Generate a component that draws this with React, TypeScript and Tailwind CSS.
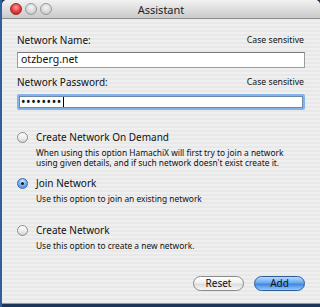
const radios = [
  {
    label: "Create Network On Demand",
    desc: [
      "When using this option HamachiX will first try to join a network",
      "using given details, and if such network doesn't exist create it.",
    ],
    checked: false,
    gap: "mt-0",
  },
  { label: "Join Network", desc: ["Use this option to join an existing network"], checked: true, gap: "mt-[8px]" },
  { label: "Create Network", desc: ["Use this option to create a new network."], checked: false, gap: "mt-[19px]" },
];

function Light({ color }: { color: "red" | "gray" }) {
  return (
    <span
      className={`block h-[12px] w-[12px] rounded-full border ${
        color === "red"
          ? "border-[#9c2a2a] bg-[radial-gradient(circle_at_50%_35%,#ff9a9a_0%,#e23a3a_55%,#b01818_100%)]"
          : "border-[#9a9a9a] bg-[radial-gradient(circle_at_50%_35%,#f4f4f4_0%,#d6d6d6_60%,#b5b5b5_100%)]"
      }`}
    />
  );
}

function Radio({ checked }: { checked: boolean }) {
  if (checked) {
    return (
      <span className="flex h-[11px] w-[11px] items-center justify-center rounded-full border border-[#3b6db0] bg-[radial-gradient(circle_at_50%_30%,#e0f0ff_0%,#7fb4ee_45%,#3f82d8_100%)]">
        <span className="block h-[3px] w-[3px] rounded-full bg-[#101c2c]" />
      </span>
    );
  }
  return (
    <span className="block h-[11px] w-[11px] rounded-full border border-[#8c8c8c] bg-[linear-gradient(180deg,#ffffff_0%,#eeeeee_50%,#d4d4d4_100%)]" />
  );
}

export default function App() {
  return (
    <div className="h-[307px] w-[320px] overflow-hidden bg-[#1d3558] font-['Noto_Sans',sans-serif] text-[#111]">
      <div className="flex h-[307px]">
        <div className="w-[2px] bg-[#2f5f9c]" />
        <div className="flex h-[304px] flex-1 flex-col overflow-hidden rounded-tl-[5px] rounded-tr-[5px] border-b border-[#9a9a9a] bg-[repeating-linear-gradient(180deg,#efefef_0px,#efefef_2px,#e8e8e8_2px,#e8e8e8_4px)]">
          {/* title bar */}
          <div className="relative flex h-[19px] items-center border-b border-[#8f8f8f] bg-[linear-gradient(180deg,#f2f2f2_0%,#dedede_50%,#cacaca_100%)] px-[8px]">
            <div className="flex gap-[3px]">
              <Light color="red" />
              <Light color="gray" />
              <Light color="gray" />
            </div>
            <span className="absolute inset-x-0 text-center text-[11px] leading-[19px] text-[#222]">Assistant</span>
          </div>

          <div className="flex flex-1 flex-col px-[15px] pt-[15px]">
            <div className="flex items-center justify-between text-[10px] leading-[13px]">
              <span>Network Name:</span>
              <span className="pr-[1px] text-[8.7px]">Case sensitive</span>
            </div>
            <div className="mt-[5px] flex h-[16px] items-center border border-[#9c9c9c] border-t-[#7a7a7a] bg-white px-[3px] text-[10.5px]">
              otzberg.net
            </div>

            <div className="mt-[8px] flex items-center justify-between text-[10px] leading-[13px]">
              <span>Network Password:</span>
              <span className="pr-[1px] text-[8.7px]">Case sensitive</span>
            </div>
            <div className="mt-[5px] rounded-[2px] bg-[#86b4ea] p-[2px]">
              <div className="flex h-[12px] items-center border border-[#6a88aa] bg-white px-[1px] text-[12px] leading-none tracking-[0.6px]">
                ••••••••
                <span className="ml-[1px] h-[10px] w-[1px] bg-black" />
              </div>
            </div>

            <div className="mt-[20px] flex flex-col">
              {radios.map(r => (
                <div key={r.label} className={`flex flex-col ${r.gap}`}>
                  <div className="flex items-center gap-[8px]">
                    <Radio checked={r.checked} />
                    <span className="text-[10px] leading-[14px]">{r.label}</span>
                  </div>
                  <div className="mt-[4px] pl-[19px] text-[8.4px] leading-[10px]">
                    {r.desc.map(d => (
                      <div key={d}>{d}</div>
                    ))}
                  </div>
                </div>
              ))}
            </div>

            <div className="mt-auto mb-[12px] flex justify-end gap-[10px]">
              <button className="h-[15px] w-[51px] rounded-full border border-[#8a8a8a] bg-[linear-gradient(180deg,#ffffff_0%,#f0f0f0_45%,#dcdcdc_55%,#f6f6f6_100%)] text-[10px] leading-[13px]">
                Reset
              </button>
              <button className="h-[15px] w-[51px] rounded-full border border-[#2d5c9c] bg-[linear-gradient(180deg,#b8dafb_0%,#6aa8ee_45%,#3d86e0_55%,#94cbfb_100%)] text-[10px] leading-[13px]">
                Add
              </button>
            </div>
          </div>
        </div>
      </div>
    </div>
  );
}
